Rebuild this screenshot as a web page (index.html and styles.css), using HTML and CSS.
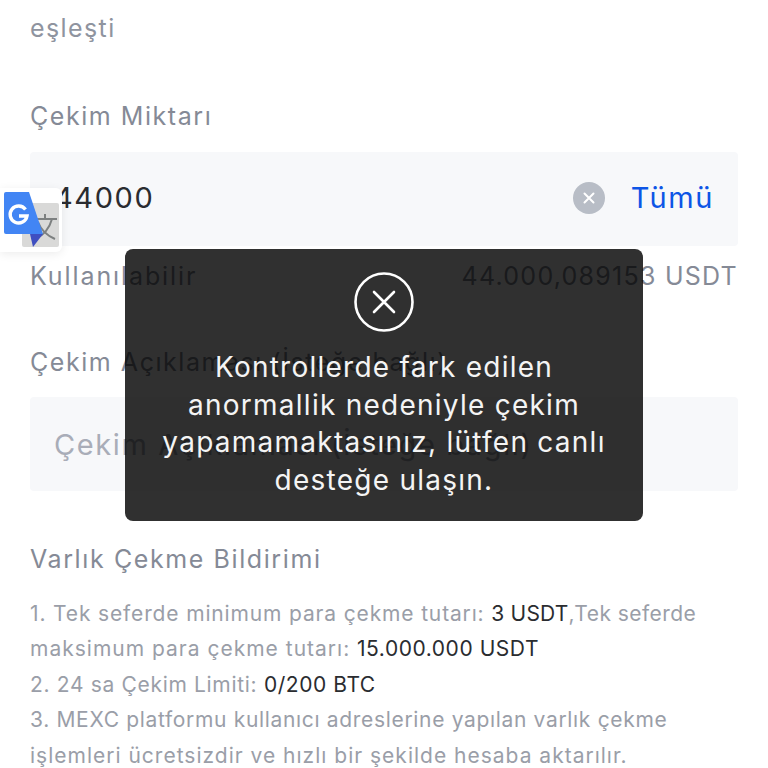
FILE: index.html
```html
<!DOCTYPE html>
<html lang="tr">
<head>
<meta charset="utf-8">
<title>Çekim</title>
<link rel="stylesheet" href="styles.css">
</head>
<body>
<main class="page">
  <p class="match">eşleşti</p>
  <label class="label amount-label">Çekim Miktarı</label>
  <div class="field amount-field">
    <span class="amount">44000</span>
    <svg class="clear" viewBox="0 0 32 32" width="32" height="32" aria-hidden="true">
      <circle cx="16" cy="16" r="16" fill="#b8bdc6"/>
      <path d="M11.5 11.5 20.5 20.5M20.5 11.5 11.5 20.5" stroke="#fff" stroke-width="2" stroke-linecap="round"/>
    </svg>
    <span class="all">Tümü</span>
  </div>
  <div class="balance"><span class="balance-name">Kullanılabilir</span><span>44.000,089153 USDT</span></div>
  <label class="label note-label">Çekim Açıklaması (İsteğe bağlı)</label>
  <div class="field note-field"><span class="placeholder">Çekim Açıklaması (İsteğe bağlı)</span></div>
  <h2 class="notice-title">Varlık Çekme Bildirimi</h2>
  <p class="notice">1. Tek seferde minimum para çekme tutarı: <b class="first">3 USDT</b><span class="tail">,Tek seferde</span><br><span class="wide">maksimum para çekme tutarı:</span> <b>15.000.000 USDT</b><br><span class="tight">2. 24 sa Çekim Limiti:</span> <b>0/200 BTC</b><br><span class="tight">3. MEXC platformu kullanıcı adreslerine yapılan varlık çekme</span><br><span class="wide">işlemleri ücretsizdir ve hızlı bir şekilde hesaba aktarılır.</span></p>
</main>

<div class="translate" aria-hidden="true">
  <svg viewBox="0 0 60 62" width="60" height="62">
    <rect x="22" y="15" width="37" height="44" rx="2" fill="#d9d9d8"/>
    <path d="M33 31H57M45 26V31M52 31C49 42 42 48 35 51M38 34C41 42 48 48 55 51" fill="none" stroke="#7d8080" stroke-width="2"/>
    <path d="M6 4H29L43 46 H6A2 2 0 0 1 4 44V6A2 2 0 0 1 6 4Z" fill="#4285f4"/>
    <path d="M30 46H43L33 59Z" fill="#3f4fc0"/>
    <path d="M25.5 21.5A8.5 8.5 0 1 0 27 28H19" fill="none" stroke="#fff" stroke-width="3.4"/>
  </svg>
</div>

<div class="toast" role="alert">
  <svg class="toast-icon" viewBox="0 0 60 60" width="60" height="60" aria-hidden="true">
    <circle cx="30" cy="30" r="28.5" fill="none" stroke="#fff" stroke-width="2.6"/>
    <path d="M20 20 40 40M40 20 20 40" stroke="#fff" stroke-width="2.6" stroke-linecap="round"/>
  </svg>
  <p class="toast-text">Kontrollerde fark edilen<br>anormallik nedeniyle çekim<br>yapamamaktasınız, lütfen canlı<br>desteğe ulaşın.</p>
</div>
</body>
</html>
```

FILE: styles.css
```css
* { box-sizing: border-box; }
html, body { margin: 0; height: 768px; overflow: hidden; background: #fff; }
body { font-family: Inter, "Liberation Sans", sans-serif; position: relative; }
p, h2 { margin: 0; font-weight: 400; }
.page { padding: 12px 30px 0; display: flex; flex-direction: column; }
.match { font-size: 25px; line-height: 32px; letter-spacing: 1.4px; color: #8f949f; }
.label { font-size: 25px; line-height: 32px; letter-spacing: 1.55px; color: #858a96; }
.amount-label { margin-top: 56px; }
.field { background: #f7f8fa; border-radius: 4px; display: flex; align-items: center; }
.amount-field { height: 94px; margin-top: 20px; padding: 0 24px; }
.amount { font-size: 29px; letter-spacing: 1.6px; color: #2a2c30; flex: 1; line-height: 32px; margin-top: -2px; }
.clear { margin-right: 26px; margin-top: -2px; }
.all { font-size: 29px; letter-spacing: 1.6px; color: #0d55e6; line-height: 32px; margin-top: -2px; }
.balance { display: flex; justify-content: space-between; margin-top: 14px; font-size: 25px; line-height: 32px; letter-spacing: 1.25px; color: #858a96; }
.balance-name { letter-spacing: 1.9px; }
.note-label { margin-top: 54px; }
.note-field { height: 94px; margin-top: 19px; padding: 0 24px; }
.placeholder { font-size: 29px; letter-spacing: 1.6px; color: #a9adb8; }
.notice-title { margin-top: 52px; font-size: 25px; line-height: 32px; letter-spacing: 1.6px; color: #858a96; }
.notice { margin-top: 21px; font-size: 21px; line-height: 35.4px; letter-spacing: .85px; color: #9a9ea8; }
.notice b { font-weight: 400; letter-spacing: .55px; color: #2a2c30; }
.notice b.first { letter-spacing: .2px; }
.tail { letter-spacing: .45px; }
.wide { letter-spacing: 1px; }
.tight { letter-spacing: .67px; }
.translate { position: absolute; left: 0; top: 188px; width: 62px; height: 64px; background: #fff; border-radius: 0 6px 6px 0; box-shadow: 0 2px 10px rgba(0,0,0,.08); }
.translate svg { display: block; }
.toast { position: absolute; left: 125px; top: 249px; width: 518px; height: 272px; background: rgba(0,0,0,.81); border-radius: 8px; padding: 23px 0 0; display: flex; flex-direction: column; align-items: center; color: #fff; }
.toast-icon { display: block; }
.toast-text { margin-top: 17px; font-size: 28px; line-height: 37.7px; letter-spacing: 1.25px; text-align: center; color: #f4f4f4; }
```
